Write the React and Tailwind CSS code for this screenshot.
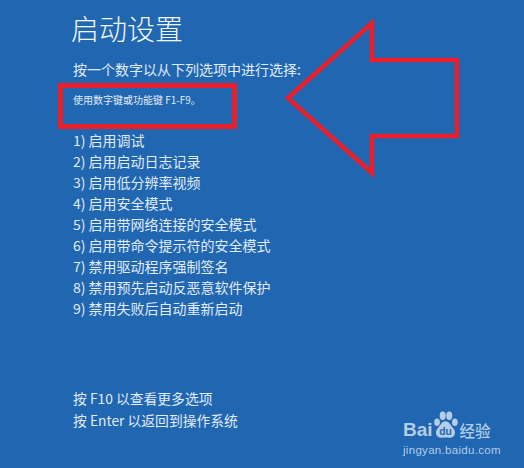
import React from 'react';

const options = [
  { num: '1)', label: '启用调试' },
  { num: '2)', label: '启用启动日志记录' },
  { num: '3)', label: '启用低分辨率视频' },
  { num: '4)', label: '启用安全模式' },
  { num: '5)', label: '启用带网络连接的安全模式' },
  { num: '6)', label: '启用带命令提示符的安全模式' },
  { num: '7)', label: '禁用驱动程序强制签名' },
  { num: '8)', label: '禁用预先启动反恶意软件保护' },
  { num: '9)', label: '禁用失败后自动重新启动' },
];

const fontStack = "font-['Noto_Sans_CJK_SC','Liberation_Sans',sans-serif]";

const App = () => {
  return (
    <div className={`relative w-[524px] h-[468px] overflow-hidden bg-[#2166b1] text-[#e0ecf8] ${fontStack}`}>
      <div className="flex flex-col h-full pl-[73px]">
        <h1 className="-ml-[2px] mt-[8px] h-[40px] text-[28px] leading-[40px] font-light text-[#f2f7fc]">启动设置</h1>
        <p className="mt-[11px] h-[20px] text-[14px] leading-[20px]">按一个数字以从下列选项中进行选择:</p>
        <p className="mt-[13px] h-[16px] text-[10px] leading-[16px]">使用数字键或功能键 F1-F9。</p>
        <ul className="mt-[22px] flex flex-col text-[14px] leading-[21px]">
          {options.map((item) => (
            <li key={item.num} className="flex gap-[3px] h-[21px]">
              <span>{item.num}</span>
              <span>{item.label}</span>
            </li>
          ))}
        </ul>
        <div className="mt-[68px] flex flex-col text-[13.8px] leading-[22px]">
          <p>按 F10 以查看更多选项</p>
          <p>按 Enter 以返回到操作系统</p>
        </div>
      </div>

      {/* red marker box */}
      <div className="absolute left-[58px] top-[83px] w-[179px] h-[46px] border-[5px] border-[#e8202c]" />

      {/* red arrow */}
      <svg className="absolute left-[280px] top-[15px]" width="185" height="166" viewBox="280 15 185 166" fill="none">
        <path d="M288 98 L372 23 L372 60 L457 60 L457 136 L372 136 L372 173 Z" stroke="#e8202c" strokeWidth="4.5" strokeLinejoin="miter" />
      </svg>

      {/* watermark */}
      <div className="absolute left-[403px] top-[411px] w-[94px] text-[#b4cde8]">
        <div className="flex items-end h-[30px]">
          <span className="font-['Liberation_Sans',sans-serif] font-bold text-[19px] leading-[23px]">Bai</span>
          <svg width="27" height="30" viewBox="0 0 26 32" className="shrink-0 -ml-[1px]">
            <g fill="#b4cde8">
              <ellipse cx="4" cy="12" rx="3" ry="4" />
              <ellipse cx="10" cy="5" rx="3.2" ry="4.5" />
              <ellipse cx="17" cy="5" rx="3.2" ry="4.5" />
              <ellipse cx="23" cy="12" rx="3" ry="4" />
              <path d="M13 11 C9 11 8 15 5 18 C1 22 3 29 9 28.5 C11 28.3 15 28.3 17 28.5 C23 29 25 22 21 18 C18 15 17 11 13 11 Z" />
            </g>
            <text x="13" y="26" textAnchor="middle" fontSize="11" fontWeight="700" fill="#2166b1" fontFamily="Liberation Sans, sans-serif">du</text>
          </svg>
          <span className="ml-[1px] text-[15.5px] leading-[22px] font-medium">经验</span>
        </div>
        <p className="mt-[2px] font-['Liberation_Sans',sans-serif] text-[11.5px] leading-[14px] tracking-[0.3px] whitespace-nowrap">jingyan.baidu.com</p>
      </div>
    </div>
  );
};

export default App;
